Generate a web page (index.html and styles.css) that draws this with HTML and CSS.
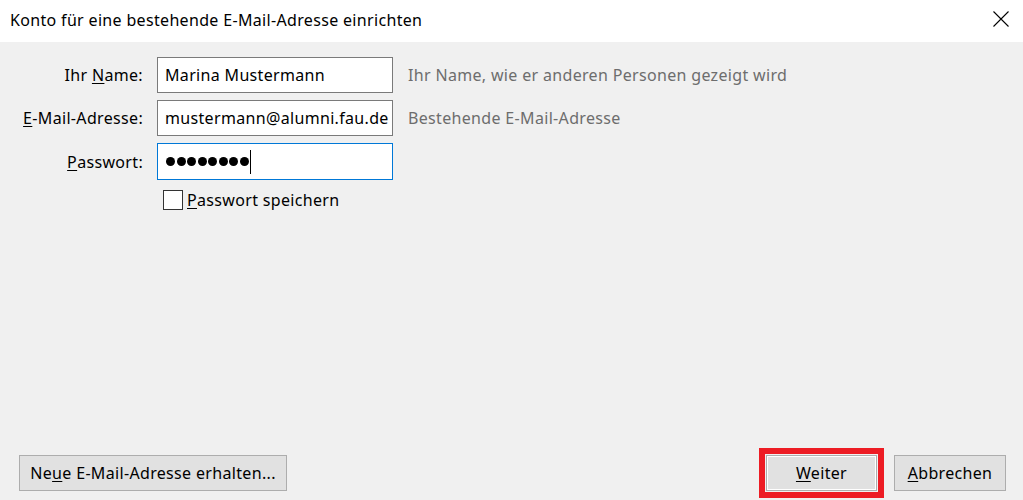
FILE: index.html
```html
<!DOCTYPE html>
<html lang="de">
<head>
<meta charset="utf-8">
<title>Konto einrichten</title>
<link rel="stylesheet" href="styles.css">
</head>
<body>
<div class="dialog">
  <header class="titlebar">
    <span class="title">Konto für eine bestehende E-Mail-Adresse einrichten</span>
    <svg class="close" width="16" height="16" viewBox="0 0 16 16" aria-label="Schließen">
      <path d="M0.5 0.5 L15.5 15.5 M15.5 0.5 L0.5 15.5" stroke="#000" stroke-width="1.1" fill="none"/>
    </svg>
  </header>
  <main class="content">
    <div class="form">
      <label class="label">Ihr <u>N</u>ame:</label>
      <div class="field"><span class="value">Marina Mustermann</span></div>
      <span class="hint">Ihr Name, wie er anderen Personen gezeigt wird</span>

      <label class="label"><u>E</u>-Mail-Adresse:</label>
      <div class="field"><span class="value">mustermann@alumni.fau.de</span></div>
      <span class="hint">Bestehende E-Mail-Adresse</span>

      <label class="label"><u>P</u>asswort:</label>
      <div class="field focused" aria-label="Passwort">
        <span class="dots"><i></i><i></i><i></i><i></i><i></i><i></i><i></i><i></i></span><span class="caret"></span>
      </div>
      <span class="hint"></span>

      <span class="label"></span>
      <div class="check-row">
        <span class="checkbox"></span>
        <span class="check-label"><u>P</u>asswort speichern</span>
      </div>
    </div>
    <div class="spacer"></div>
    <footer class="buttons">
      <button class="btn btn-new">Ne<u>u</u>e E-Mail-Adresse erhalten...</button>
      <div class="right">
        <button class="btn btn-next highlighted"><u>W</u>eiter</button>
        <button class="btn btn-cancel"><u>A</u>bbrechen</button>
      </div>
    </footer>
  </main>
</div>
</body>
</html>
```
FILE: styles.css
```css
html, body {
  margin: 0;
  padding: 0;
  background: #f0f0f0;
}
body {
  font-family: "Noto Sans", "Open Sans", sans-serif;
  font-size: 16px;
  letter-spacing: 0.33px;
  color: #000;
}
.dialog {
  width: 1023px;
  height: 500px;
  display: flex;
  flex-direction: column;
  overflow: hidden;
}
.titlebar {
  height: 42px;
  flex: none;
  background: #fff;
  display: flex;
  align-items: center;
  justify-content: space-between;
  padding: 0 14px 0 10px;
  box-sizing: border-box;
}
.title {
  font-size: 16px;
  line-height: 20px;
  padding-bottom: 2px;
}
.close {
  display: block;
  margin-bottom: 4px;
}
.content {
  flex: 1;
  display: flex;
  flex-direction: column;
  padding: 15px 17px 9px 19px;
}
.form {
  display: grid;
  grid-template-columns: 124px 236px auto;
  column-gap: 14px;
  row-gap: 7px;
  align-items: center;
}
.label {
  text-align: right;
  white-space: nowrap;
  line-height: 20px;
}
.field {
  height: 36px;
  box-sizing: border-box;
  border: 1px solid #7a7a7a;
  background: #fff;
  display: flex;
  align-items: center;
  padding-left: 7px;
  overflow: hidden;
  white-space: nowrap;
}
.field.focused {
  border-color: #0078d7;
  height: 37px;
}
.value {
  line-height: 20px;
}
.hint {
  color: #6d6d6d;
  margin-left: 1px;
  white-space: nowrap;
}
.dots {
  display: flex;
  gap: 1.5px;
  padding-left: 1px;
}
.dots i {
  display: block;
  width: 9px;
  height: 9px;
  border-radius: 50%;
  background: #000;
}
.caret {
  display: block;
  width: 1px;
  height: 24px;
  background: #000;
  margin-left: 1px;
}
.check-row {
  grid-column: 2 / 4;
  display: flex;
  align-items: center;
  padding-left: 6px;
  margin-top: 3px;
}
.checkbox {
  width: 20px;
  height: 20px;
  box-sizing: border-box;
  border: 1px solid #333;
  background: #fff;
  margin-right: 4px;
}
.check-label {
  line-height: 20px;
}
.spacer {
  flex: 1;
}
.buttons {
  display: flex;
  justify-content: space-between;
  align-items: flex-end;
}
.right {
  display: flex;
  gap: 17px;
}
.btn {
  font-family: inherit;
  font-size: 16px;
  letter-spacing: 0.33px;
  color: #000;
  height: 36px;
  box-sizing: border-box;
  background: #e1e1e1;
  border: 1px solid #adadad;
  border-radius: 0;
  padding: 0;
  margin: 0;
}
.btn-new { width: 268px; }
.btn-next { width: 111px; }
.btn-cancel { width: 112px; }
.highlighted {
  box-shadow: inset 0 0 0 1px #fff;
  outline: 6px solid #ed1c24;
  outline-offset: 1px;
}
u {
  text-decoration-thickness: 1px;
  text-underline-offset: 2px;
}
```
